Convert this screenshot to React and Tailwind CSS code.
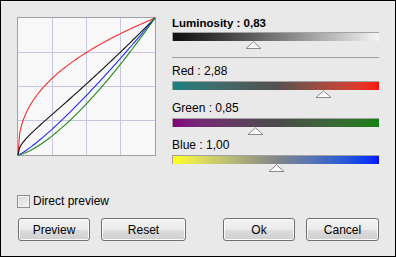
const curve = (fn) => {
    const pts = [];
    for (let i = 0; i <= 80; i++) {
        const x = i / 80;
        const y = fn(x);
        pts.push(`${(1 + x * 137).toFixed(2)},${(138 - y * 137).toFixed(2)}`);
    }
    return 'M' + pts.join(' L');
};

const red = x => Math.pow(x, 0.418);
const green = x => Math.pow(x, 1.418);
const blue = x => Math.pow(x, 1.2);
const lum = x => (red(x) + green(x) + blue(x)) / 3;

const Graph = () => (
    <svg width="139" height="139" viewBox="0 0 139 139" className="shrink-0">
        <rect x="0.5" y="0.5" width="138" height="138" fill="#f8f8f8" stroke="#a0a0a0" />
        {[35.5, 69.5, 103.5].map(p => (
            <g key={p}>
                <line x1={p} y1="1" x2={p} y2="138" stroke="#c8c6de" />
                <line x1="1" y1={p} x2="138" y2={p} stroke="#c8c6de" />
            </g>
        ))}
        <path d={curve(red)} fill="none" stroke="#f52b2b" strokeWidth="1.1" />
        <path d={curve(lum)} fill="none" stroke="#111" strokeWidth="1.1" />
        <path d={curve(blue)} fill="none" stroke="#1f2cf5" strokeWidth="1.1" />
        <path d={curve(green)} fill="none" stroke="#1f8a1f" strokeWidth="1.1" />
    </svg>
);

const Thumb = ({ pos }) => (
    <div className="h-[8px] flex">
        <svg width="17" height="8" viewBox="0 0 17 8" style={{ marginLeft: Math.round(pos * 207) - 8 }}>
            <path d="M8.5 0.8 L16 7.5 L1 7.5 Z" fill="#fbfbfb" stroke="#8a8a8a" />
        </svg>
    </div>
);

const Slider = ({ label, bold, bar, pos, gap }) => (
    <div className="flex flex-col">
        <div className={`h-[14px] leading-[14px] text-black ${bold ? 'font-bold text-[11.5px]' : 'text-[12px]'}`}>{label}</div>
        <div className={`${gap} h-[9px] border-t border-l border-[#a3a3a3] ${bar}`} />
        <Thumb pos={pos} />
    </div>
);

const Button = ({ children, w }) => (
    <button className={`${w} h-[23px] rounded-[3px] border border-[#707070] bg-[linear-gradient(to_bottom,#f2f2f2_0%,#ebebeb_50%,#dddddd_50%,#cfcfcf_100%)] shadow-[inset_0_0_0_1px_#fbfbfb] text-[12px] text-black leading-none`}>
        {children}
    </button>
);

export default function App() {
    return (
        <div className="w-[396px] h-[257px] border border-black bg-[#e9e9e9] pt-4 pl-4 flex flex-col font-['Liberation_Sans',Arial,sans-serif]">
            <div className="flex gap-4">
                <Graph />
                <div className="w-[207px] -mt-px flex flex-col">
                    <Slider label="Luminosity : 0,83" bold gap="mt-[2px]" pos={0.39} bar="bg-linear-to-r from-[#101010] to-[#f5f5f5]" />
                    <div className="mt-[8px] h-px bg-[#a0a0a0]" />
                    <div className="mt-[6px]">
                        <Slider label="Red : 2,88" gap="mt-[3px]" pos={0.73} bar="bg-linear-to-r from-[#138080] via-[#525050] to-[#ff1010]" />
                    </div>
                    <div className="mt-[3px]">
                        <Slider label="Green : 0,85" gap="mt-[3px]" pos={0.40} bar="bg-linear-to-r from-[#820082] via-[#4a4a4a] to-[#108010]" />
                    </div>
                    <div className="mt-[3px]">
                        <Slider label="Blue : 1,00" gap="mt-[3px]" pos={0.50} bar="bg-linear-to-r from-[#ffff10] via-[#858585] to-[#0c0cff]" />
                    </div>
                </div>
            </div>
            <div className="mt-[23px] flex items-center gap-[3px] h-[13px]">
                <div className="w-[13px] h-[13px] border border-[#8e8f8f] bg-[linear-gradient(135deg,#d8d8d8,#f4f4f4)] shadow-[inset_0_0_0_1px_#f4f4f4]" />
                <span className="text-[12px] text-black leading-[13px]">Direct preview</span>
            </div>
            <div className="mt-[10px] ml-px w-[361px] flex">
                <div className="flex gap-[11px]">
                    <Button w="w-[72px]">Preview</Button>
                    <Button w="w-[85px]">Reset</Button>
                </div>
                <div className="ml-auto flex gap-[11px]">
                    <Button w="w-[72px]">Ok</Button>
                    <Button w="w-[73px]">Cancel</Button>
                </div>
            </div>
        </div>
    );
}
